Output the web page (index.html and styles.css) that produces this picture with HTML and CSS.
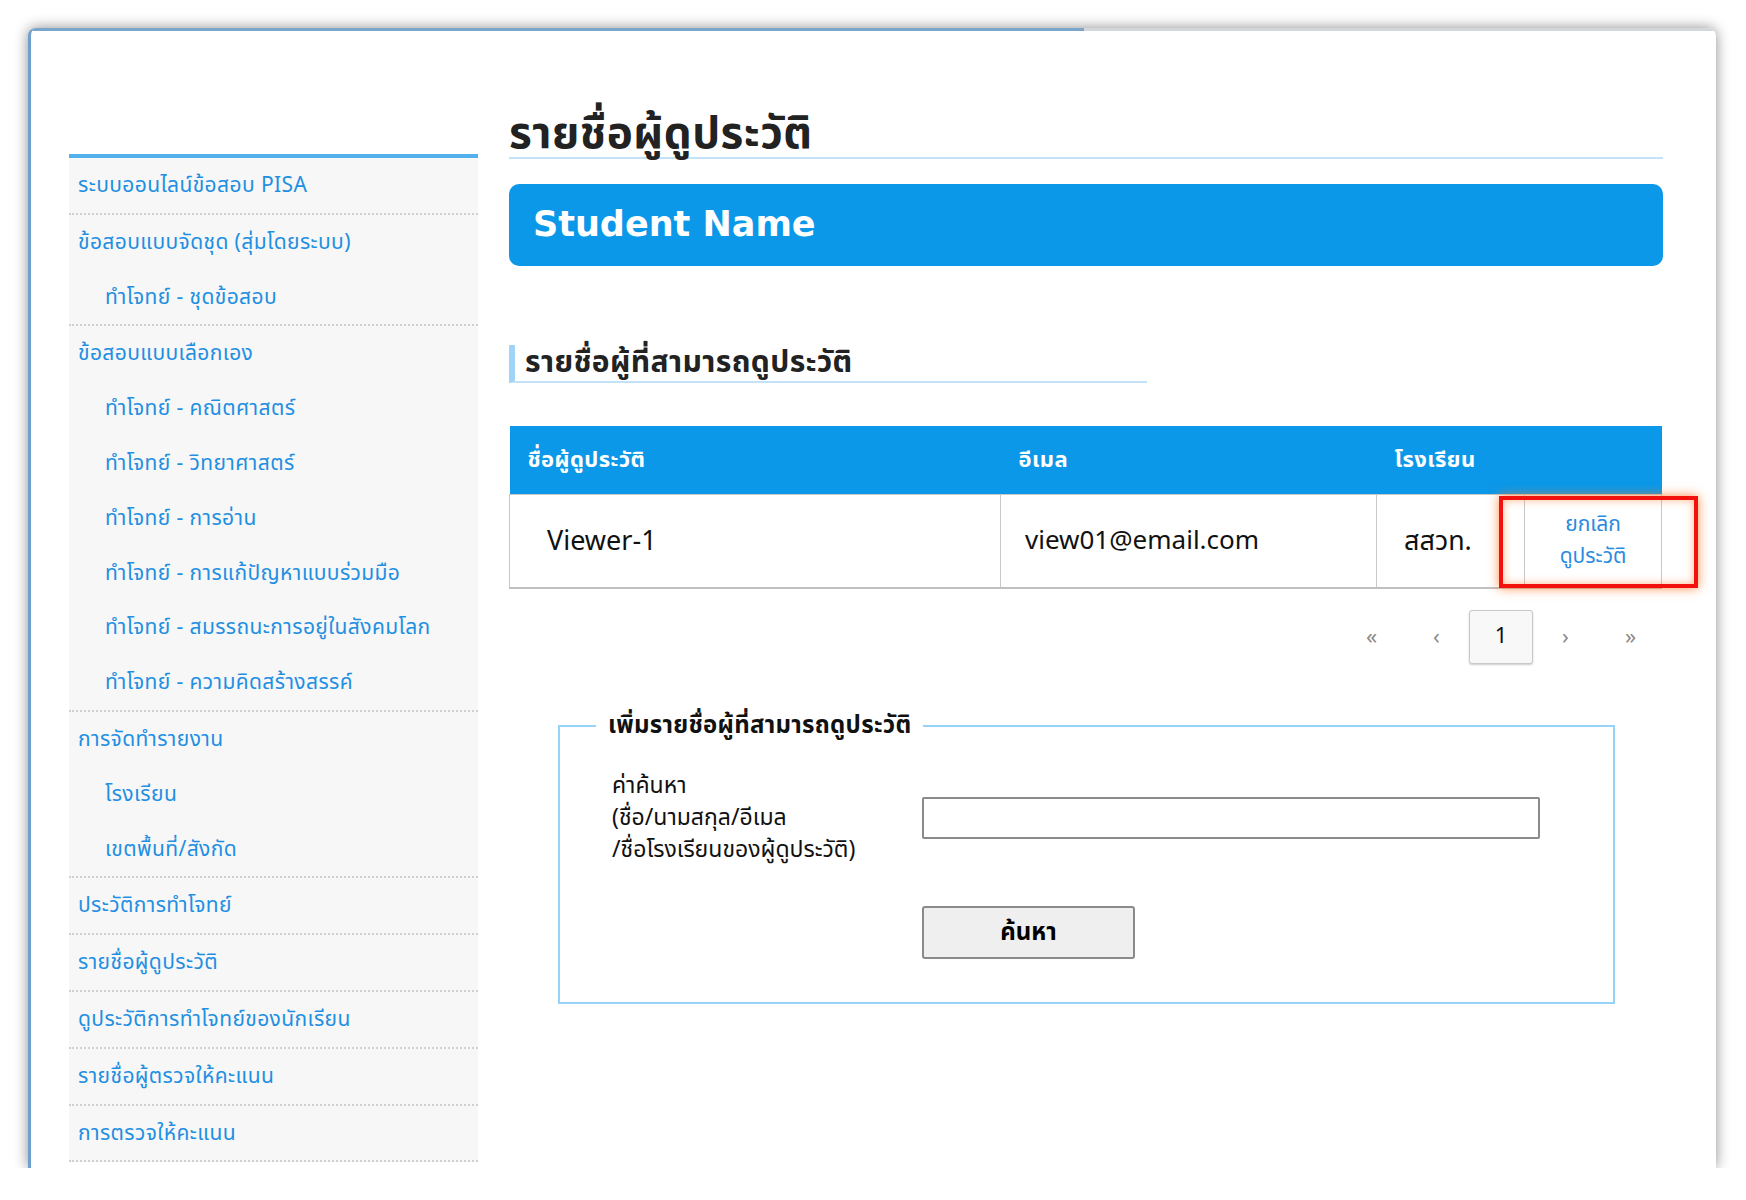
FILE: index.html
```html
<!DOCTYPE html>
<html lang="th">
<head>
<meta charset="UTF-8">
<title>รายชื่อผู้ดูประวัติ</title>
<link rel="stylesheet" href="styles.css">
</head>
<body>
<div class="frame">
  <div class="frame-top"></div>
  <div class="page">

    <ul class="sidebar">
      <li class="group"><a href="#">ระบบออนไลน์ข้อสอบ PISA</a></li>
      <li class="group">
        <a href="#">ข้อสอบแบบจัดชุด (สุ่มโดยระบบ)</a>
        <a class="sub" href="#">ทำโจทย์ - ชุดข้อสอบ</a>
      </li>
      <li class="group">
        <a href="#">ข้อสอบแบบเลือกเอง</a>
        <a class="sub" href="#">ทำโจทย์ - คณิตศาสตร์</a>
        <a class="sub" href="#">ทำโจทย์ - วิทยาศาสตร์</a>
        <a class="sub" href="#">ทำโจทย์ - การอ่าน</a>
        <a class="sub" href="#">ทำโจทย์ - การแก้ปัญหาแบบร่วมมือ</a>
        <a class="sub" href="#">ทำโจทย์ - สมรรถนะการอยู่ในสังคมโลก</a>
        <a class="sub" href="#">ทำโจทย์ - ความคิดสร้างสรรค์</a>
      </li>
      <li class="group">
        <a href="#">การจัดทำรายงาน</a>
        <a class="sub" href="#">โรงเรียน</a>
        <a class="sub" href="#">เขตพื้นที่/สังกัด</a>
      </li>
      <li class="group"><a href="#">ประวัติการทำโจทย์</a></li>
      <li class="group"><a href="#">รายชื่อผู้ดูประวัติ</a></li>
      <li class="group"><a href="#">ดูประวัติการทำโจทย์ของนักเรียน</a></li>
      <li class="group"><a href="#">รายชื่อผู้ตรวจให้คะแนน</a></li>
      <li class="group"><a href="#">การตรวจให้คะแนน</a></li>
    </ul>

    <div class="main">
      <h1 class="title">รายชื่อผู้ดูประวัติ</h1>
      <div class="banner">Student Name</div>

      <h2 class="subtitle">รายชื่อผู้ที่สามารถดูประวัติ</h2>

      <table class="viewers">
        <thead>
          <tr>
            <th class="c-name">ชื่อผู้ดูประวัติ</th>
            <th class="c-mail">อีเมล</th>
            <th class="c-school">โรงเรียน</th>
            <th class="c-act"></th>
          </tr>
        </thead>
        <tbody>
          <tr>
            <td>Viewer-1</td>
            <td>view01@email.com</td>
            <td>สสวท.</td>
            <td class="act"><a href="#">ยกเลิก<br>ดูประวัติ</a><span class="mark"></span></td>
          </tr>
        </tbody>
      </table>

      <div class="pager">
        <span>&laquo;</span>
        <span>&lsaquo;</span>
        <span class="current">1</span>
        <span>&rsaquo;</span>
        <span>&raquo;</span>
      </div>

      <fieldset class="add-box">
        <legend>เพิ่มรายชื่อผู้ที่สามารถดูประวัติ</legend>
        <div class="search-row">
          <label for="q">ค่าค้นหา<br>(ชื่อ/นามสกุล/อีเมล<br>/ชื่อโรงเรียนของผู้ดูประวัติ)</label>
          <input id="q" type="text">
        </div>
        <div class="btn-row">
          <button type="button">ค้นหา</button>
        </div>
      </fieldset>
    </div>

  </div>
</div>
</body>
</html>
```

FILE: styles.css
```css
body {
  margin: 0;
  background: #fff;
  font-family: Tahoma, "Noto Sans Thai", "Noto Sans", sans-serif;
  color: #111;
}

.frame {
  margin: 28px 0 0 28px;
  width: 1685px;
  height: 1140px;
  overflow: hidden;
  background: #fff;
  border-left: 3px solid #6f9fcc;
  border-radius: 8px 8px 0 0;
  box-shadow: 0 0 14px rgba(0,0,0,0.45);
}

.frame-top {
  height: 3px;
  background: linear-gradient(to right, #7aa6cc 62.5%, #d3d7dc 62.5%);
}

.page {
  display: flex;
  gap: 31px;
  padding-left: 38px;
}

/* menu de gauche */
.sidebar {
  list-style: none;
  margin: 123px 0 0 0;
  padding: 0;
  width: 409px;
  background: #f7f7f7;
  border-top: 4px solid #52b1ec;
}

.sidebar .group {
  border-bottom: 2px dotted #d0d0d0;
}

.sidebar a {
  display: block;
  height: 54.8px;
  line-height: 55px;
  padding-left: 9px;
  font-size: 21px;
  letter-spacing: 0.4px;
  color: #1f8fe2;
  text-decoration: none;
}

.sidebar a.sub {
  padding-left: 36px;
}

/* contenu */
.main {
  width: 1154px;
}

.title {
  margin: 82px 0 0 0;
  font-size: 44px;
  line-height: 44px;
  letter-spacing: 0.5px;
  color: #222;
  border-bottom: 2px solid #c4e3f8;
}

.banner {
  margin-top: 25px;
  height: 82px;
  line-height: 80px;
  padding-left: 24px;
  background: #0b98e8;
  border-radius: 10px;
  color: #fff;
  font-size: 35px;
  font-weight: bold;
  font-family: Tahoma, "DejaVu Sans", sans-serif;
}

.subtitle {
  margin: 79px 0 0 0;
  width: 622px;
  padding-left: 10px;
  height: 36px;
  line-height: 36px;
  font-size: 30px;
  letter-spacing: 0.4px;
  color: #222;
  border-left: 6px solid #9fd4f6;
  border-bottom: 2px solid #c4e3f8;
}

.viewers {
  margin-top: 43px;
  width: 1153px;
  border-collapse: collapse;
}

.viewers th {
  height: 68px;
  background: #0b98e8;
  color: #fff;
  text-align: left;
  padding: 0 0 0 18px;
  font-size: 22px;
  letter-spacing: 0.4px;
}

.viewers .c-name { width: 473px; }
.viewers .c-mail { width: 358px; }
.viewers .c-school { width: 130px; }

.viewers td {
  height: 92px;
  border: 1px solid #c8c8c8;
  border-bottom: 2px solid #c0c0c0;
  padding: 0 0 0 37px;
  font-size: 27px;
  color: #111;
}

.viewers td:nth-child(2) { padding-left: 24px; font-size: 26px; }
.viewers td:nth-child(3) { padding-left: 27px; }

.viewers td.act {
  position: relative;
  padding: 0;
  text-align: center;
  font-size: 21px;
  line-height: 32px;
}

.viewers td.act a {
  color: #2a8be0;
  text-decoration: none;
}

/* cadre rouge de mise en evidence */
.mark {
  position: absolute;
  left: -26px;
  right: -37px;
  top: 1px;
  bottom: -1px;
  border: 4px solid #f2110c;
  box-shadow: 0 0 10px rgba(255,120,40,0.85), inset 0 0 9px rgba(255,120,40,0.55);
}

.pager {
  display: flex;
  justify-content: flex-end;
  align-items: center;
  margin-top: 21px;
  padding-right: 0;
}

.pager span {
  width: 65px;
  text-align: center;
  font-size: 22px;
  color: #8a8a8a;
}

.pager .current {
  width: 62px;
  height: 52px;
  line-height: 52px;
  border: 1px solid #c8c8c8;
  border-radius: 3px;
  background: #f8f8f8;
  color: #111;
  font-size: 22px;
  box-shadow: 0 1px 2px rgba(0,0,0,0.2);
}

.add-box {
  margin: 44px 48px 0 49px;
  padding: 26px 0 0 0;
  border: 2px solid #97d3f6;
  height: 266px;
}

.add-box legend {
  padding: 0 12px;
  margin-left: 36px;
  font-size: 24px;
  font-weight: bold;
  letter-spacing: 0.3px;
  color: #111;
}

.search-row {
  display: flex;
  align-items: center;
  gap: 36px;
  padding-left: 52px;
}

.search-row label {
  width: 274px;
  font-size: 23px;
  line-height: 32px;
}

.search-row input {
  width: 610px;
  height: 36px;
  border: 2px solid #8a8a8a;
  border-radius: 2px;
}

.btn-row {
  margin-top: 40px;
  padding-left: 362px;
}

.btn-row button {
  width: 213px;
  height: 53px;
  background: #efefef;
  border: 2px solid #8a8a8a;
  border-radius: 3px;
  font-size: 24px;
  font-weight: bold;
  font-family: inherit;
}
```
